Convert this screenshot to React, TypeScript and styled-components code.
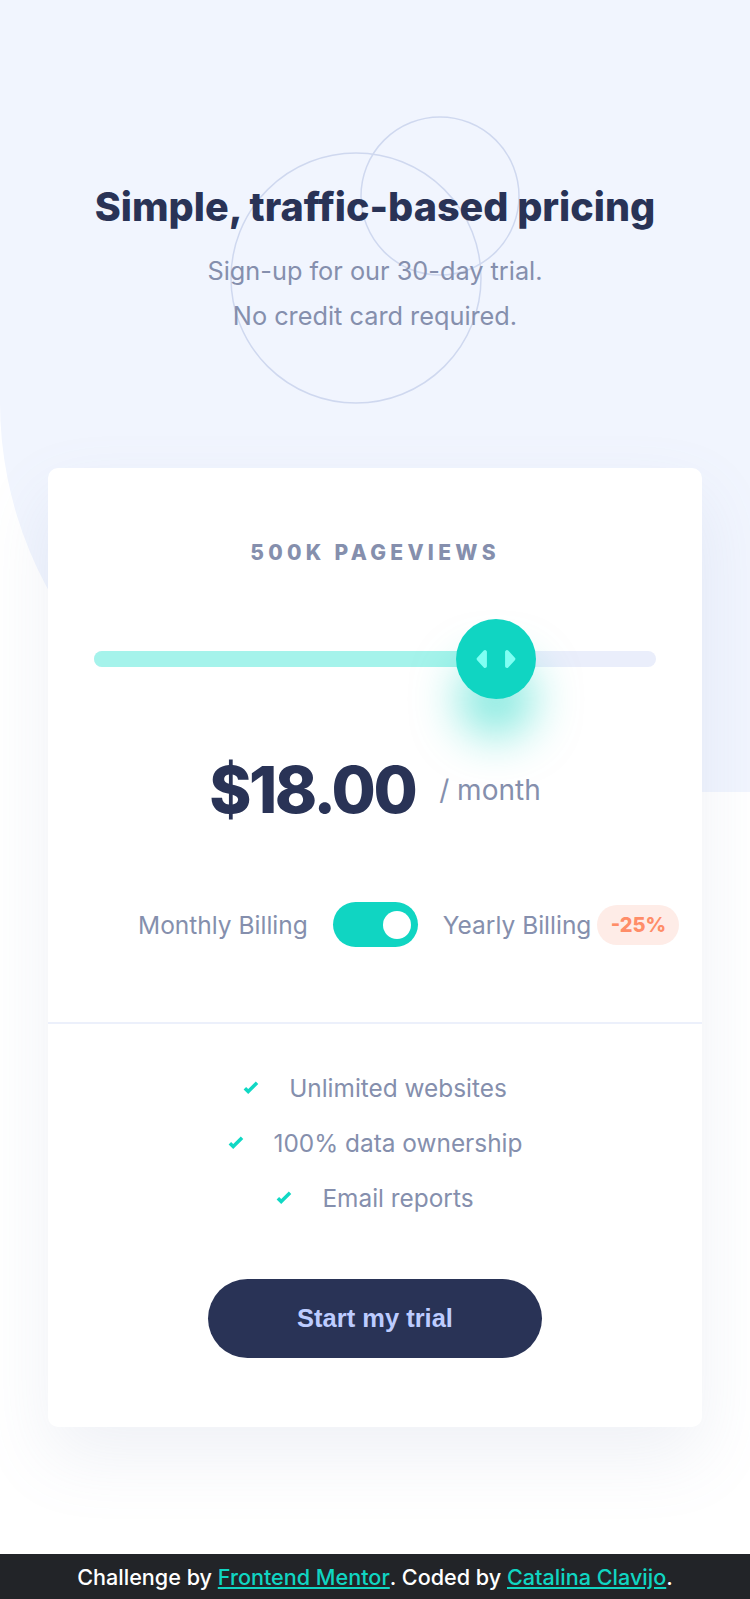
import styled, { createGlobalStyle } from "styled-components"

const GlobalStyle = createGlobalStyle`
  * { box-sizing: border-box; }
  body {
    margin: 0;
    background: #ffffff;
    font-family: Inter, "Noto Sans", sans-serif;
  }
`

const steps = [
  { views: "10K", price: 8 },
  { views: "50K", price: 12 },
  { views: "100K", price: 16 },
  { views: "500K", price: 24 },
  { views: "1M", price: 36 },
]

const Page = styled.div`
  position: relative;
  min-height: 100vh;
  display: flex;
  flex-direction: column;
  overflow: hidden;

  &::before {
    content: "";
    position: absolute;
    top: 0;
    left: 0;
    right: 0;
    height: 792px;
    background: #f1f5fe;
    border-bottom-left-radius: 390px;
    z-index: 0;
  }
`

const Main = styled.main`
  position: relative;
  z-index: 1;
  flex: 1;
  padding: 184px 48px 100px;
`

const Header = styled.header`
  position: relative;
  text-align: center;
  margin-bottom: 130px;
`

const Circles = styled.svg`
  position: absolute;
  top: -69px;
  left: 50%;
  margin-left: -146px;
  z-index: -1;
`

const Title = styled.h1`
  margin: 0 0 18px;
  font-size: 39.5px;
  line-height: 46px;
  font-weight: 800;
  color: #293356;
`

const Subtitle = styled.p`
  margin: 0;
  font-size: 25.3px;
  line-height: 45px;
  color: #858fad;
`

const Card = styled.section`
  background: #ffffff;
  border-radius: 10px;
  box-shadow: 0 30px 70px rgba(127, 137, 185, 0.12);
`

const Top = styled.div`
  padding: 70px 46px 75px;
  display: flex;
  flex-direction: column;
  align-items: center;
`

const Views = styled.h2`
  margin: 0;
  font-size: 21px;
  line-height: 30px;
  font-weight: 800;
  letter-spacing: 4.3px;
  color: #858fad;
`

const Slider = styled.div`
  position: relative;
  width: 100%;
  height: 16px;
  margin-top: 83px;
  border-radius: 8px;
  background: #eaeefb;
`

const Fill = styled.div`
  height: 100%;
  border-radius: 8px;
  background: #a5f3eb;
`

const Thumb = styled.div`
  position: absolute;
  top: 50%;
  width: 80px;
  height: 80px;
  margin: -40px 0 0 -40px;
  border-radius: 50%;
  background: #10d5c2;
  display: flex;
  align-items: center;
  justify-content: center;
  box-shadow: 0 40px 45px -2px rgba(16, 213, 194, 0.5);
`

const PriceRow = styled.div`
  display: flex;
  align-items: center;
  gap: 24px;
  margin-top: 83px;
`

const Price = styled.span`
  font-size: 64px;
  line-height: 80px;
  font-weight: 800;
  letter-spacing: -2.5px;
  color: #293356;
`

const Period = styled.span`
  font-size: 28px;
  line-height: 34px;
  color: #858fad;
`

const BillingRow = styled.div`
  display: flex;
  align-items: center;
  align-self: stretch;
  padding-left: 44px;
  margin-right: -46px;
  margin-top: 72px;
  white-space: nowrap;
`

const BillingLabel = styled.span`
  flex-shrink: 0;
  font-size: 24.5px;
  line-height: 32px;
  color: #858fad;
`

const Toggle = styled.div`
  flex-shrink: 0;
  width: 85px;
  height: 45px;
  margin: 0 25px;
  padding: 0 7px;
  border-radius: 23px;
  background: #10d5c2;
  display: flex;
  align-items: center;
  justify-content: flex-end;

  &::after {
    content: "";
    width: 28px;
    height: 28px;
    border-radius: 50%;
    background: #ffffff;
  }
`

const Badge = styled.span`
  flex-shrink: 0;
  margin-left: 6px;
  width: 82px;
  height: 40px;
  border-radius: 20px;
  background: #feece7;
  color: #ff8d68;
  font-size: 20px;
  font-weight: 800;
  display: flex;
  align-items: center;
  justify-content: center;
`

const Divider = styled.hr`
  margin: 0;
  border: none;
  border-top: 2px solid #ecf0fb;
`

const Bottom = styled.div`
  padding: 48px 46px 69px;
  display: flex;
  flex-direction: column;
  align-items: center;
`

const Features = styled.ul`
  list-style: none;
  margin: 0;
  padding: 0;
  display: flex;
  flex-direction: column;
  align-items: center;
  gap: 23px;
`

const Feature = styled.li`
  display: flex;
  align-items: center;
  gap: 30px;
  font-size: 24.4px;
  line-height: 32px;
  color: #858fad;
`

const Button = styled.button`
  margin-top: 65px;
  width: 334px;
  height: 79px;
  border: none;
  border-radius: 40px;
  background: #293356;
  color: #bdccff;
  font-family: "Liberation Sans", Arial, sans-serif;
  font-size: 25.5px;
  font-weight: 700;
`

const Footer = styled.footer`
  position: relative;
  z-index: 1;
  height: 45px;
  background: #222428;
  color: #ffffff;
  font-size: 21.6px;
  font-weight: 500;
  display: flex;
  align-items: center;
  justify-content: center;
`

const Link = styled.a`
  color: #10d5c2;
`

const CheckIcon = () => (
  <svg width="16" height="14" viewBox="0 0 9 8">
    <path fill="none" stroke="#10D8C4" strokeWidth="2" d="M1 4.134l1.907 1.908L7.949 1" />
  </svg>
)

const SliderIcon = () => (
  <svg width="40" height="24" viewBox="0 0 22 13">
    <path
      fill="#80FFF3"
      d="M16 2.558v7.884a1 1 0 001.735.679l3.639-3.943a1 1 0 000-1.356l-3.64-3.943A1 1 0 0016 2.558zM6 2.558v7.884a1 1 0 01-1.735.679L.626 7.178a1 1 0 010-1.356l3.64-3.943A1 1 0 016 2.558z"
    />
  </svg>
)

const App = () => {
  const index = 3
  const yearly = true
  const step = steps[index]
  const price = yearly ? step.price * 0.75 : step.price
  const ratio = index / (steps.length - 1)
  const thumbLeft = `calc(40px + ${ratio} * (100% - 80px))`

  return (
    <Page>
      <GlobalStyle />
      <Main>
        <Header>
          <Circles width="292" height="290" viewBox="0 0 146 145">
            <g fill="none" stroke="#CFD8EF" strokeWidth="0.75">
              <circle cx="63.5" cy="81.5" r="62.5" />
              <circle cx="105.5" cy="40.5" r="39.5" />
            </g>
          </Circles>
          <Title>Simple, traffic-based pricing</Title>
          <Subtitle>
            Sign-up for our 30-day trial.
            <br />
            No credit card required.
          </Subtitle>
        </Header>

        <Card>
          <Top>
            <Views>{step.views} PAGEVIEWS</Views>
            <Slider>
              <Fill style={{ width: thumbLeft }} />
              <Thumb style={{ left: thumbLeft }}>
                <SliderIcon />
              </Thumb>
            </Slider>
            <PriceRow>
              <Price>${price.toFixed(2)}</Price>
              <Period>/ month</Period>
            </PriceRow>
            <BillingRow>
              <BillingLabel>Monthly Billing</BillingLabel>
              <Toggle />
              <BillingLabel>Yearly Billing</BillingLabel>
              <Badge>-25%</Badge>
            </BillingRow>
          </Top>
          <Divider />
          <Bottom>
            <Features>
              <Feature>
                <CheckIcon />
                Unlimited websites
              </Feature>
              <Feature>
                <CheckIcon />
                100% data ownership
              </Feature>
              <Feature>
                <CheckIcon />
                Email reports
              </Feature>
            </Features>
            <Button>Start my trial</Button>
          </Bottom>
        </Card>
      </Main>
      <Footer>
        Challenge by&nbsp;<Link href="#">Frontend Mentor</Link>. Coded by&nbsp;
        <Link href="#">Catalina Clavijo</Link>.
      </Footer>
    </Page>
  )
}

export default App
